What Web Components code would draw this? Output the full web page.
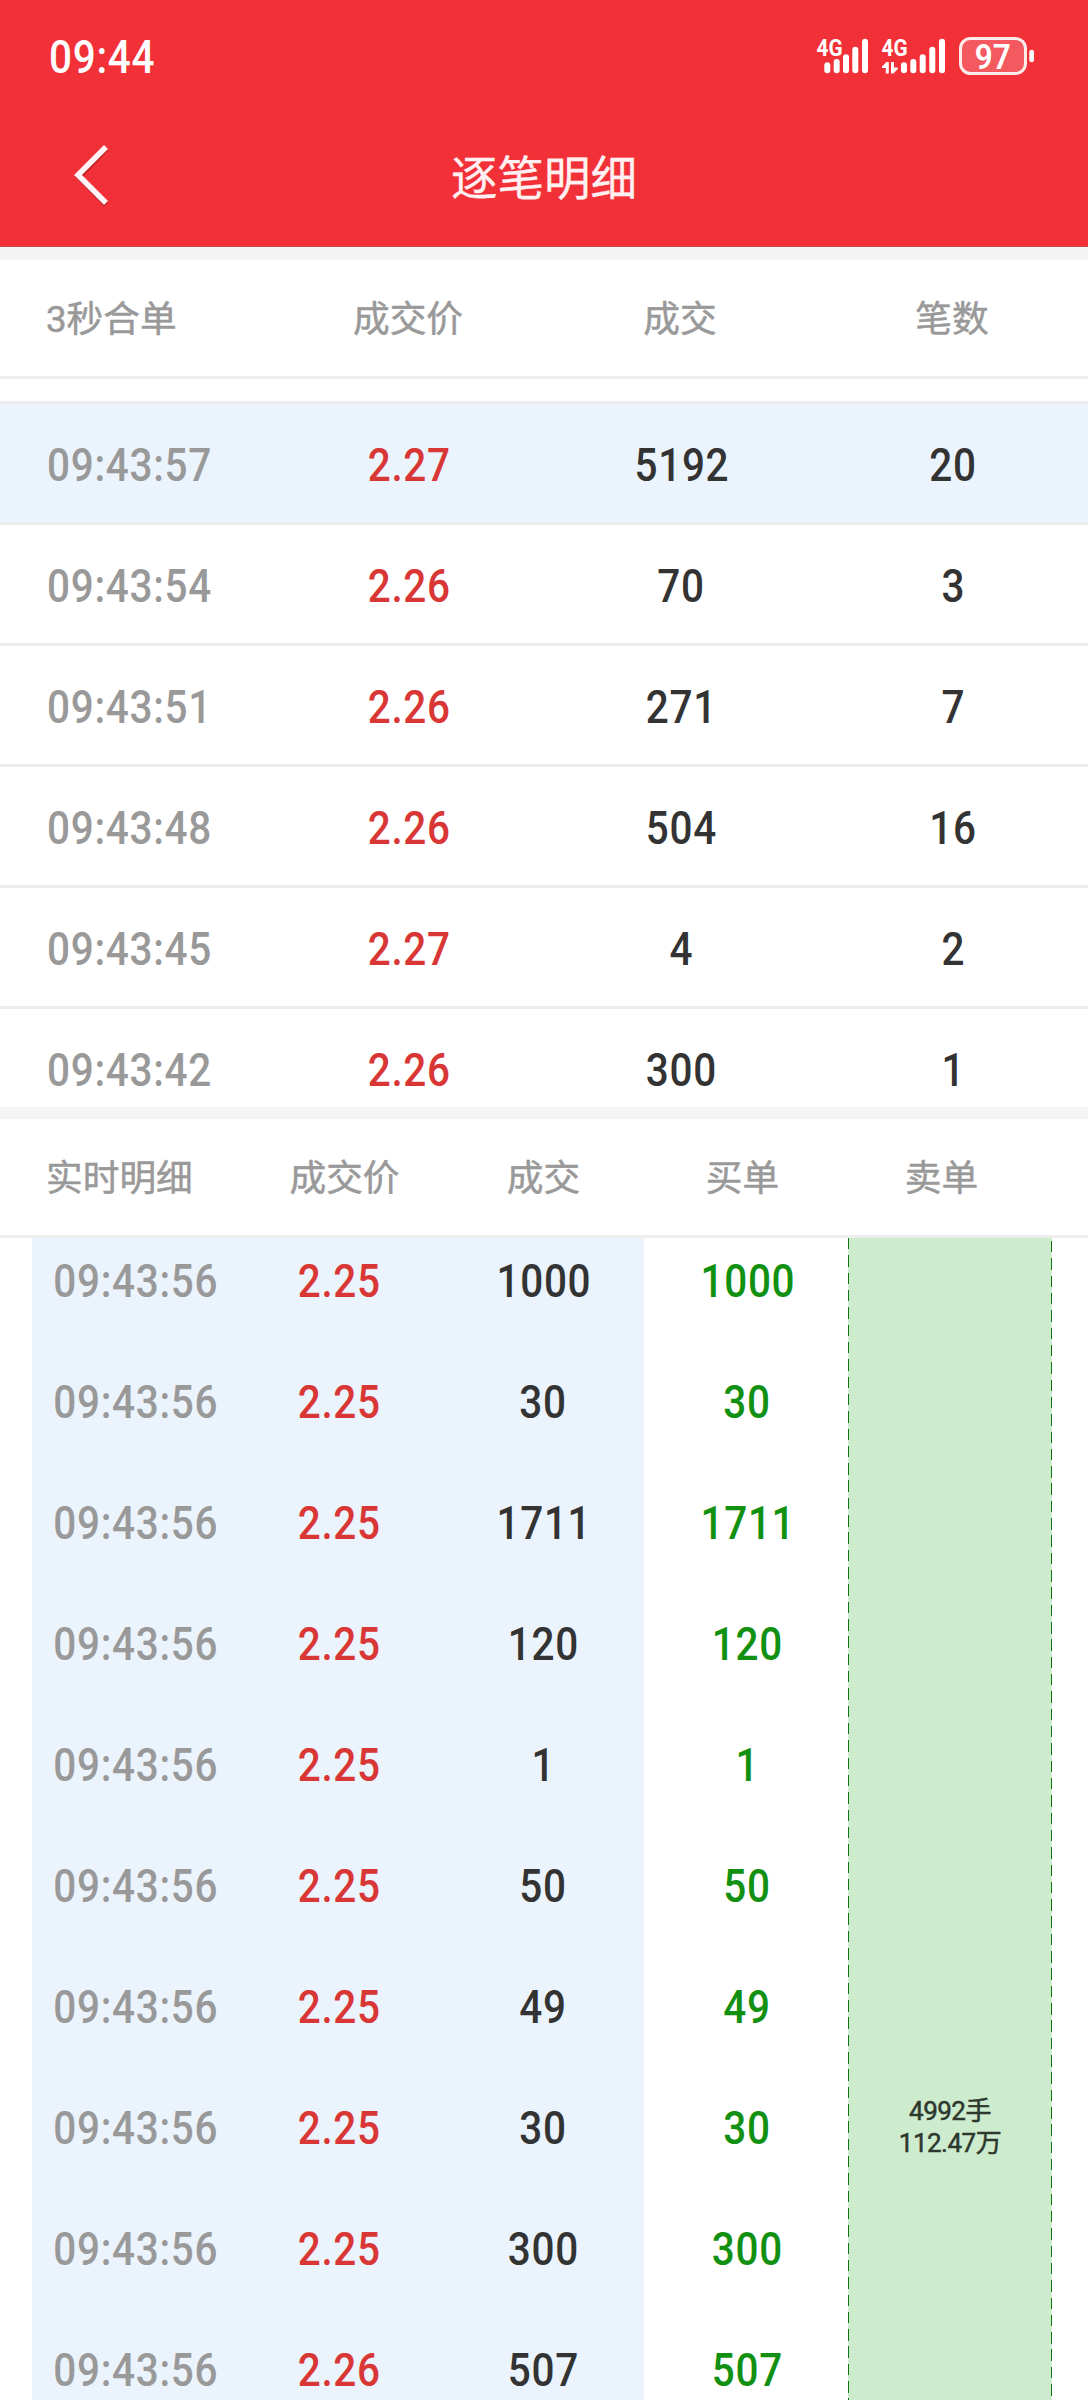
<!DOCTYPE html>
<html lang="zh-CN">
<head>
<meta charset="utf-8">
<title>逐笔明细</title>
<style>
html,body{margin:0;padding:0;background:#fff}
body{width:1088px;height:2400px;overflow:hidden;font-family:Roboto,"Noto Sans CJK SC",sans-serif}
</style>
</head>
<body>
<trade-page></trade-page>
<script>
function define(name, render){
  customElements.define(name, class extends HTMLElement{
    connectedCallback(){
      if(this.shadowRoot) return;
      this.attachShadow({mode:'open'}).innerHTML = render(this);
    }
  });
}

/* Narrow tabular figures */
define('num-text', () => `<style>
:host{display:inline-block;font:500 46px/54px Roboto,sans-serif;white-space:nowrap}
span{display:inline-block;letter-spacing:.8px;margin-right:-.8px;transform:translateX(var(--dx,1px)) scaleX(.88);transform-origin:var(--origin,center)}
</style><span><slot></slot></span>`);

define('status-bar', () => {
  const bars = xs => xs.map((x,i)=>{const t=[62.3,59,54.3,46.7,38.7][i];
    return `<rect x="${x-3}" y="${t}" width="6" height="${73.3-t}" rx="3"/>`}).join('');
  return `<style>
:host{display:flex;justify-content:space-between;height:112px;color:#fff}
num-text{margin:30px 0 0 48px;--origin:left}
svg{display:block}
text{font-family:Roboto,sans-serif}
</style>
<num-text>09:44</num-text>
<svg width="288" height="112" viewBox="800 0 288 112" fill="#fff">
<text x="816.5" y="56" font-size="24" font-weight="700" textLength="26" lengthAdjust="spacingAndGlyphs">4G</text>
${bars([827.3,836.7,846,855.3,865])}
<text x="881.5" y="56" font-size="24" font-weight="700" textLength="26" lengthAdjust="spacingAndGlyphs">4G</text>
${bars([904,913.3,922.7,932.3,942])}
<path d="M888.8 62V73.5H885.8V68H882V66.5L886.5 62ZM891 62H894V67.5H897.8V69L893.4 73.5H891Z"/>
<rect x="960.5" y="38.5" width="65" height="35" rx="10" fill="rgba(255,255,255,.2)" stroke="#fff" stroke-opacity=".9" stroke-width="3"/>
<text x="974.7" y="68.5" font-size="34.5" font-weight="600" textLength="36" lengthAdjust="spacingAndGlyphs">97</text>
<rect x="1029.3" y="49.7" width="4.7" height="12.6" rx="2.35"/>
</svg>`;
});

define('nav-bar', () => `<style>
:host{display:grid;grid-template-columns:180px 1fr 180px;align-items:center;height:134px;color:#fff1f2}
svg{display:block;margin:0 0 8px 60px}
h1{margin:0 0 8px;text-align:center;font:400 46.5px/60px "Noto Sans CJK SC",sans-serif;-webkit-text-stroke:.3px currentColor}
</style>
<svg width="60" height="70" viewBox="60 140 60 70"><path d="M106 148.5L79 176.5L106 204.5" fill="none" stroke="rgba(90,0,0,.35)" stroke-width="6"/><path d="M106 147L78 175L106 203" fill="none" stroke="#fff4f5" stroke-width="5.6"/></svg>
<h1><slot></slot></h1>`);

define('table-head', el => `<style>
:host{display:grid;grid-template-columns:${el.getAttribute('cols')};box-sizing:border-box;height:119px;border-bottom:3px solid #eee;background:#fff;
color:#999;font:400 36.7px/54px Roboto,"Noto Sans CJK SC",sans-serif;-webkit-text-stroke:.5px currentColor;align-items:center;text-align:center}
span{padding-top:3px}
span:first-of-type{text-align:left;padding-left:46px}
</style>${el.getAttribute('labels').split(',').map(t=>`<span>${t}</span>`).join('')}`);

define('merged-row', el => {
  const [t,p,v,n]=el.getAttribute('data').split(',');
  return `<style>
:host{display:grid;grid-template-columns:repeat(4,272px);align-items:center;justify-items:center;box-sizing:border-box;height:121px;padding-top:3px;border-bottom:3px solid #ececec;color:#333}
:host([active]){background:#ebf3fd}
.t{justify-self:start;margin-left:46px;color:#999;--origin:left}
.p{color:#d93636}
</style><num-text class="t">${t}</num-text><num-text class="p">${p}</num-text><num-text>${v}</num-text><num-text>${n}</num-text>`;
});

define('tick-row', el => {
  const [p,v]=el.getAttribute('data').split(',');
  return `<style>
:host{display:grid;grid-template-columns:612px 204px;height:121px}
.d{display:grid;grid-template-columns:repeat(3,204px);background:#ebf3fd}
.d,.b{align-items:center;justify-items:center;color:#333}
.b{display:grid;color:#119011}
.t{color:#999}.p{color:#d93636}
</style><div class="d"><num-text class="t">09:43:56</num-text><num-text class="p">${p}</num-text><num-text>${v}</num-text></div>
<div class="b"><num-text>${v}</num-text></div>`;
});

define('sell-order', () => `<style>
:host{display:flex;flex-direction:column;align-items:center;box-sizing:border-box;width:204px;padding-top:857px;color:#2d382d;
font:400 26px/32px Roboto,"Noto Sans CJK SC",sans-serif;letter-spacing:-.5px;-webkit-text-stroke:.5px currentColor;
--dash:repeating-linear-gradient(#117311 0 11.5px,transparent 11.5px 17.32px);
background:var(--dash) 0 0/1px 100% no-repeat,var(--dash) 203px 3px/1px 100% no-repeat,#cdebcd}
</style><slot></slot>`);

define('trade-page', () => {
  const merged=['09:43:57,2.27,5192,20','09:43:54,2.26,70,3','09:43:51,2.26,271,7','09:43:48,2.26,504,16','09:43:45,2.27,4,2','09:43:42,2.26,300,1'];
  const ticks=['2.25,1000','2.25,30','2.25,1711','2.25,120','2.25,1','2.25,50','2.25,49','2.25,30','2.25,300','2.26,507'];
  return `<style>
:host{display:flex;flex-direction:column;width:1088px;height:2400px;overflow:hidden;background:#fff}
header{background:#f23037;border-bottom:1px solid #c64a50}
.gap{height:13px;background:#f4f4f4;flex:none}
.gap.s{height:12px}
.merged{height:728px;overflow:hidden}
.lead{height:22px;border-bottom:3px solid #ececec}
.ticks{display:flex;height:1162px;margin-left:32px;overflow:hidden}
.rows{width:816px;margin-top:-18px}
</style>
<header><status-bar></status-bar><nav-bar>逐笔明细</nav-bar></header>
<div class="gap"></div>
<table-head cols="repeat(4,272px)" labels="3秒合单,成交价,成交,笔数"></table-head>
<div class="merged"><div class="lead"></div>${merged.map((d,i)=>`<merged-row data="${d}" ${i?'':'active'}></merged-row>`).join('')}</div>
<div class="gap s"></div>
<table-head cols="245px repeat(4,199px)" labels="实时明细,成交价,成交,买单,卖单"></table-head>
<div class="ticks"><div class="rows">${ticks.map(d=>`<tick-row data="${d}"></tick-row>`).join('')}</div>
<sell-order><span>4992手</span><span>112.47万</span></sell-order></div>`;
});
</script>
</body>
</html>
